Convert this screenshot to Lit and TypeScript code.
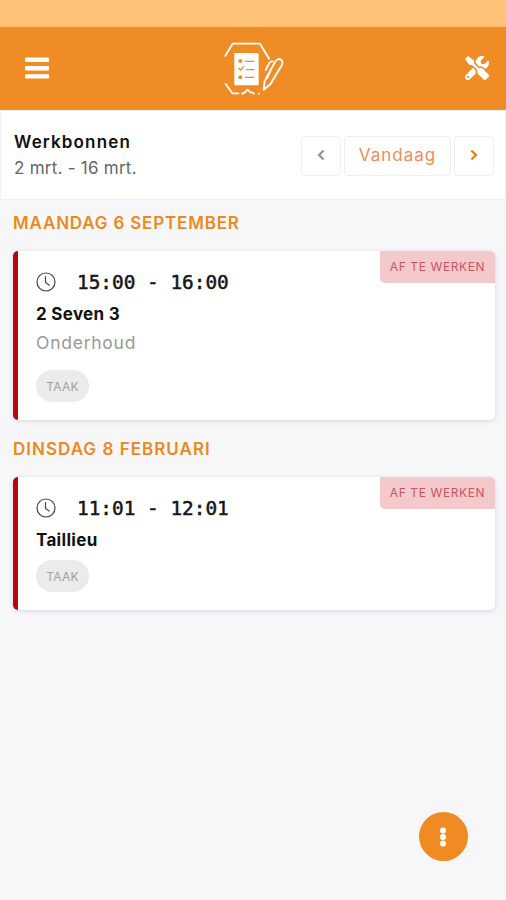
import { LitElement, html, css, nothing } from "lit";
import { customElement, property } from "lit/decorators.js";

interface Job {
  day: string;
  time: string;
  customer: string;
  kind?: string;
  tag: string;
  status: string;
}

const JOBS: Job[] = [
  { day: "MAANDAG 6 SEPTEMBER", time: "15:00 - 16:00", customer: "2 Seven 3", kind: "Onderhoud", tag: "TAAK", status: "AF TE WERKEN" },
  { day: "DINSDAG 8 FEBRUARI", time: "11:01 - 12:01", customer: "Taillieu", tag: "TAAK", status: "AF TE WERKEN" },
];

@customElement("job-card")
export class JobCard extends LitElement {
  @property({ attribute: false }) job!: Job;

  static styles = css`
    :host { display: block; }
    .card {
      position: relative;
      box-sizing: border-box;
      padding: 19px 20px 18px 18px;
      border-left: 5px solid #b9060b;
      border-radius: 5px;
      background: #fff;
      box-shadow: 0 1px 4px rgba(40, 40, 60, 0.16);
    }
    .status {
      position: absolute;
      top: 0;
      right: 0;
      box-sizing: border-box;
      width: 115px;
      height: 32px;
      line-height: 32px;
      text-align: center;
      font-size: 12px;
      letter-spacing: 0.6px;
      color: #c9555f;
      background: #f3c9cc;
      border-radius: 0 5px 0 5px;
      white-space: nowrap;
    }
    .when { display: flex; align-items: center; height: 25px; }
    .clock { display: block; width: 20px; height: 20px; margin: 0 21px 1px 0; }
    .time {
      font: 19.4px/25px "DejaVu Sans Mono", monospace;
      color: #161616;
      white-space: pre;
      -webkit-text-stroke: 0.5px #161616;
    }
    .customer { font-size: 17px; font-weight: 700; line-height: 26px; margin-top: 6px; color: #111; letter-spacing: 0.3px; }
    .kind { font-size: 17.5px; line-height: 24px; margin-top: 4px; color: #999; letter-spacing: 0.75px; }
    .tag {
      display: flex;
      align-items: center;
      justify-content: center;
      width: 53px;
      height: 32px;
      margin-top: 7px;
      border-radius: 16px;
      background: #ebebeb;
      color: #a0a0a0;
      font-size: 12px;
      letter-spacing: 0.3px;
    }
    .kind + .tag { margin-top: 15px; }
  `;

  render() {
    const j = this.job;
    return html`<article class="card">
      <div class="status">${j.status}</div>
      <div class="when">
        <svg class="clock" viewBox="0 0 20 20" fill="none" stroke="#444" stroke-width="1.2" stroke-linecap="round">
          <circle cx="10" cy="10" r="9" />
          <path d="M9.5 4.5v6l3.6 2.6" />
        </svg>
        <span class="time">${j.time}</span>
      </div>
      <div class="customer">${j.customer}</div>
      ${j.kind ? html`<div class="kind">${j.kind}</div>` : nothing}
      <div class="tag">${j.tag}</div>
    </article>`;
  }
}

@customElement("app-root")
export class AppRoot extends LitElement {
  static styles = css`
    :host {
      display: block;
      position: relative;
      box-sizing: border-box;
      height: 900px;
      overflow: hidden;
      background: #f7f7fa;
      font-family: Inter, "Open Sans", sans-serif;
    }
    .statusbar { height: 27px; background: #ffc278; }
    .header {
      display: flex;
      align-items: center;
      justify-content: space-between;
      box-sizing: border-box;
      height: 83px;
      padding: 0 17px 2px 25px;
      background: #f08c26;
    }
    .menu { display: block; width: 24px; height: 24px; }
    .logo { display: block; width: 90px; height: 75px; margin-right: 5px; }
    .tools { display: block; width: 24px; height: 24px; }
    .toolbar {
      display: flex;
      align-items: center;
      justify-content: space-between;
      box-sizing: border-box;
      height: 90px;
      padding: 0 11px 0 13px;
      border: 1px solid #f1f1f3;
      background: #fff;
    }
    .title { font-size: 17px; font-weight: 600; line-height: 26px; letter-spacing: 1.15px; color: #111; }
    .range { font-size: 17px; line-height: 26px; color: #666; letter-spacing: 0.25px; }
    .nav { display: flex; gap: 3px; padding-top: 2px; }
    .btn {
      display: flex;
      align-items: center;
      justify-content: center;
      box-sizing: border-box;
      width: 40px;
      height: 40px;
      border: 1px solid #efeff0;
      border-radius: 4px;
      background: #fff;
    }
    .today { width: 107px; padding-bottom: 2px; font-size: 17px; letter-spacing: 1px; color: #f08d58; }
    .chevron { display: block; width: 8px; height: 12px; margin: 0 1px 2px 0; fill: none; stroke-width: 2.4; }
    .prev { stroke: #999; }
    .next { stroke: #ea8215; }
    .list { padding: 9px 11px 0 13px; }
    .day { margin: 0; height: 28px; line-height: 28px; font-size: 17px; font-weight: 600; color: #ea8a20; }
    .day0 { letter-spacing: 0.82px; }
    .day1 { letter-spacing: 1.02px; }
    .job { margin: 14px 0 15px; }
    .fab {
      position: absolute;
      right: 38px;
      bottom: 39px;
      display: grid;
      place-items: center;
      width: 49px;
      height: 49px;
      border-radius: 50%;
      background: #ef8b22;
    }
    .dots { display: block; width: 8px; height: 22px; fill: #fff; margin-right: 1px; }
  `;

  render() {
    return html`
      <div class="statusbar"></div>
      <header class="header">
        <svg class="menu" viewBox="0 0 24 24" fill="#fff">
          <rect y="1.5" width="24" height="4.6" rx="1" />
          <rect y="10" width="24" height="4.4" rx="1" />
          <rect y="18.3" width="24" height="4.2" rx="1" />
        </svg>
        <svg class="logo" viewBox="0 0 270 225" fill="none" stroke="#fff" stroke-width="5.5" stroke-linecap="round" stroke-linejoin="round">
          <path d="M46 77L68 41H150L177 86M47 162L67 190H85M97 191L104 187M104 188L113 179L121 187M126 187L132 191M146 191H147" />
          <rect x="73" y="69" width="73" height="97" rx="3" fill="#fff" stroke="none" />
          <g stroke="#f08c26" stroke-width="4">
            <path d="M106 94H131M110 119H131M106 142H131M86 115L92 120L101 110" />
            <g fill="#f08c26" stroke="none"><circle cx="91" cy="93" r="6" /><circle cx="91" cy="142" r="6" /></g>
          </g>
          <path d="M161 179L164 153L196 94Q204 83 213 89Q220 94 216 104L181 163L161 179M188 94Q180 93 177 101L167 120M182 121L171 145" />
        </svg>
        <svg class="tools" viewBox="0 0 512 512" fill="#fff">
          <path d="M501.1 395.7L384 278.6c-23.1-23.1-57.6-27.6-85.4-13.9L192 158.1V96L64 0 0 64l96 128h62.1l106.6 106.6c-13.6 27.8-9.2 62.3 13.9 85.4l117.1 117.1c14.6 14.6 38.2 14.6 52.7 0l52.7-52.7c14.5-14.6 14.5-38.2 0-52.7zM331.7 225c28.3 0 54.9 11 74.9 31l19.4 19.4c15.8-6.9 30.8-16.5 43.8-29.5 37.1-37.1 49.7-89.3 37.9-136.7-2.2-9-13.5-12.1-20.1-5.5l-74.4 74.4-67.9-11.3L334 98.9l74.4-74.4c6.6-6.6 3.4-17.9-5.7-20.2-47.4-11.7-99.6.9-136.6 37.9-28.5 28.5-41.9 66.1-41.2 103.6l82.1 82.1c8.1-1.9 16.5-2.9 24.7-2.9zm-103.9 82l-56.7-56.7L18.7 402.8c-25 25-25 65.5 0 90.5s65.5 25 90.5 0l123.6-123.6c-7.6-19.9-9.9-41.6-5-62.7zM64 472c-13.2 0-24-10.8-24-24 0-13.3 10.7-24 24-24s24 10.7 24 24c0 13.2-10.7 24-24 24z" />
        </svg>
      </header>
      <section class="toolbar">
        <div>
          <div class="title">Werkbonnen</div>
          <div class="range">2 mrt. - 16 mrt.</div>
        </div>
        <div class="nav">
          <div class="btn"><svg class="chevron prev" viewBox="0 0 8 12"><path d="M6.6 1.5L2.1 6l4.5 4.5" /></svg></div>
          <div class="btn today">Vandaag</div>
          <div class="btn"><svg class="chevron next" viewBox="0 0 8 12"><path d="M1.4 1.5L5.9 6l-4.5 4.5" /></svg></div>
        </div>
      </section>
      <main class="list">
        ${JOBS.map((job, i) => html`
          <h2 class="day day${i}">${job.day}</h2>
          <job-card class="job" .job=${job}></job-card>
        `)}
      </main>
      <div class="fab">
        <svg class="dots" viewBox="0 0 8 22"><circle cx="4" cy="4.4" r="3" /><circle cx="4" cy="11" r="3" /><circle cx="4" cy="17.6" r="3" /></svg>
      </div>
    `;
  }
}
